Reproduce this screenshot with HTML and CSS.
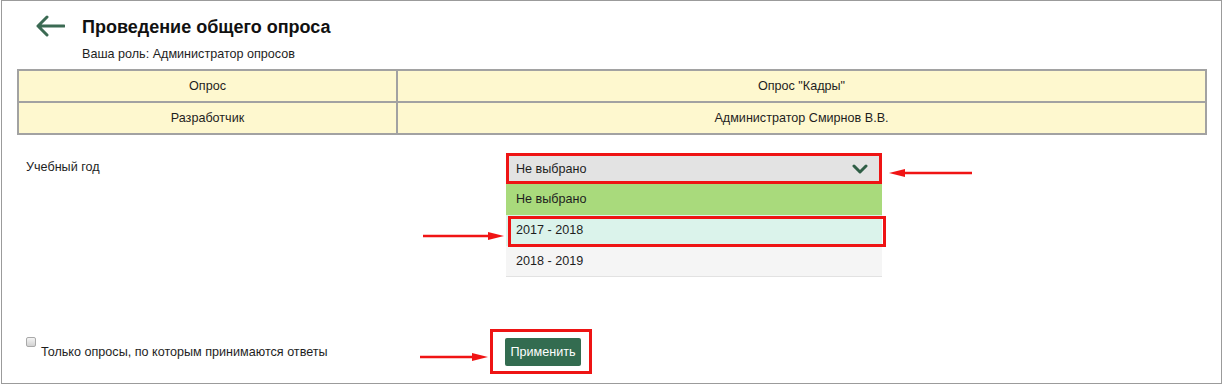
FILE: index.html
```html
<!DOCTYPE html>
<html lang="ru">
<head>
<meta charset="utf-8">
<title>Проведение общего опроса</title>
<link rel="stylesheet" href="styles.css">
</head>
<body>
<div class="frame">
  <div class="head">
    <svg class="back" width="30" height="22" viewBox="0 0 30 22" aria-hidden="true">
      <path d="M29 11 H3 M12 2 L3 11 L12 20" fill="none" stroke="#3b6a53" stroke-width="3" stroke-linecap="round" stroke-linejoin="round"/>
    </svg>
    <h1 class="title">Проведение общего опроса</h1>
  </div>
  <div class="role">Ваша роль: Администратор опросов</div>

  <table class="info">
    <colgroup><col class="c1"><col></colgroup>
    <tr><td>Опрос</td><td>Опрос "Кадры"</td></tr>
    <tr><td>Разработчик</td><td>Администратор Смирнов В.В.</td></tr>
  </table>

  <div class="form-row">
    <div class="label">Учебный год</div>
    <div class="select-wrap">
      <div class="select">
        <span>Не выбрано</span>
        <svg class="chev" width="16" height="10" viewBox="0 0 16 10" aria-hidden="true">
          <path d="M2 2 L8 8 L14 2" fill="none" stroke="#2f5e46" stroke-width="3" stroke-linecap="round" stroke-linejoin="round"/>
        </svg>
      </div>
      <ul class="options">
        <li class="opt opt-sel">Не выбрано</li>
        <li class="opt opt-hover">2017 - 2018</li>
        <li class="opt opt-plain">2018 - 2019</li>
      </ul>
    </div>
  </div>

  <div class="bottom-row">
    <div class="check">
      <input type="checkbox" class="cb">
      <span class="check-label">Только опросы, по которым принимаются ответы</span>
    </div>
    <div class="btn-wrap">
      <button class="btn">Применить</button>
    </div>
  </div>

  <svg class="ann ann1" width="84" height="10" viewBox="0 0 84 10" aria-hidden="true">
    <line x1="83" y1="5" x2="14" y2="5" stroke="#f01414" stroke-width="2.5"/>
    <polygon points="0,5 16,1 16,9" fill="#f01414"/>
  </svg>
  <svg class="ann ann2" width="81" height="10" viewBox="0 0 81 10" aria-hidden="true">
    <line x1="0" y1="5" x2="67" y2="5" stroke="#f01414" stroke-width="2.5"/>
    <polygon points="81,5 65,1 65,9" fill="#f01414"/>
  </svg>
  <svg class="ann ann3" width="68" height="10" viewBox="0 0 68 10" aria-hidden="true">
    <line x1="0" y1="5" x2="54" y2="5" stroke="#f01414" stroke-width="2.5"/>
    <polygon points="68,5 52,1 52,9" fill="#f01414"/>
  </svg>
</div>
</body>
</html>
```

FILE: styles.css
```css
* { box-sizing: border-box; }

body {
  margin: 0;
  background: #fff;
  font-family: "Liberation Sans", Arial, sans-serif;
  font-size: 12.6px;
  color: #1e1e1e;
}

.frame {
  position: relative;
  margin-left: 1px;
  width: 1221px;
  height: 384px;
  border: 1px solid #9b9b9b;
  overflow: hidden;
}

.head {
  display: flex;
  align-items: flex-start;
  padding: 15px 0 0 33px;
}

.back {
  margin-top: -1px;
  margin-right: 17px;
  flex: none;
}

.title {
  margin: 0;
  font-size: 18px;
  font-weight: bold;
  line-height: 22px;
  color: #111;
}

.role {
  margin-top: 9px;
  padding-left: 80px;
  line-height: 14px;
}

.info {
  margin: 8px 0 0 15px;
  width: 1190px;
  border-collapse: collapse;
  background: #fef8cf;
}

.info .c1 { width: 379px; }

.info td {
  height: 32px;
  border: 2px solid #a2a2a2;
  text-align: center;
  vertical-align: middle;
  padding: 0 4px;
}

.form-row {
  display: grid;
  grid-template-columns: 480px 376px;
  margin-top: 18px;
  padding-left: 24px;
}

.label {
  padding-top: 7px;
  line-height: 14px;
}

.select {
  display: flex;
  align-items: center;
  justify-content: space-between;
  height: 31px;
  border: 3px solid #ee1414;
  background: #e3e3e3;
  padding: 0 11px 0 7px;
}

.chev { flex: none; margin-top: 1px; }

.options {
  list-style: none;
  margin: 0;
  padding: 0;
}

.opt {
  height: 31px;
  line-height: 31px;
  padding-left: 10px;
}

.opt-sel { background: #a9da7c; }

.opt-hover {
  position: relative;
  background: #dbf3eb;
}

.opt-hover::after {
  content: "";
  position: absolute;
  top: 1px;
  left: 2px;
  right: -4px;
  bottom: -1px;
  border: 3px solid #ee1414;
}

.opt-plain {
  background: #f5f5f5;
  border-bottom: 1px solid #e2e2e2;
}

.bottom-row {
  display: grid;
  grid-template-columns: 480px auto;
  margin-top: 52px;
  padding-left: 24px;
}

.check {
  display: flex;
  align-items: flex-start;
}

.cb {
  appearance: none;
  -webkit-appearance: none;
  width: 10px;
  height: 10px;
  margin: 8px 5px 0 0;
  border: 1px solid #a9a9a9;
  border-radius: 2px;
  background: linear-gradient(#f4f4f4, #d2d2d2);
  flex: none;
}

.check-label {
  padding-top: 16px;
  line-height: 14px;
}

.btn-wrap {
  justify-self: start;
  margin-left: -16px;
  border: 3px solid #ee1414;
  padding: 6px 8px 5px 12px;
}

.btn {
  display: block;
  width: 76px;
  height: 28px;
  border: none;
  border-radius: 2px;
  background: #336c50;
  color: #fff;
  font-family: "Liberation Sans", Arial, sans-serif;
  font-size: 12.6px;
  padding: 0;
}

.ann { position: absolute; }
.ann1 { left: 887px; top: 167px; }
.ann2 { left: 421px; top: 230px; }
.ann3 { left: 418px; top: 351px; }
```
